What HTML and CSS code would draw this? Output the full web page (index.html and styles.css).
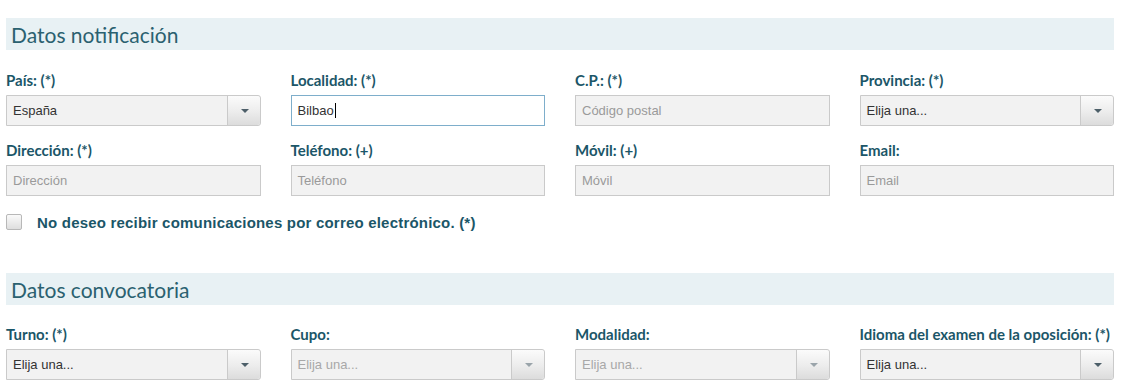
FILE: index.html
```html
<!DOCTYPE html>
<html>
    <head>
        <title>Solicitud</title>
        <meta charset="UTF-8">
        <link rel="stylesheet" href="styles.css">
    </head>
    <body>
        <!-- Datos notificación -->
        <div class="section">
            <h2 class="section-title">Datos notificación</h2>
            <div class="row">
                <div class="field">
                    <label>País: (*)</label>
                    <div class="select"><span>España</span><i class="arrow"></i></div>
                </div>
                <div class="field">
                    <label>Localidad: (*)</label>
                    <div class="input focus">Bilbao<span class="caret"></span></div>
                </div>
                <div class="field">
                    <label>C.P.: (*)</label>
                    <div class="input empty">Código postal</div>
                </div>
                <div class="field">
                    <label>Provincia: (*)</label>
                    <div class="select"><span>Elija una...</span><i class="arrow"></i></div>
                </div>
            </div>
            <div class="row">
                <div class="field">
                    <label>Dirección: (*)</label>
                    <div class="input empty">Dirección</div>
                </div>
                <div class="field">
                    <label>Teléfono: (+)</label>
                    <div class="input empty">Teléfono</div>
                </div>
                <div class="field">
                    <label>Móvil: (+)</label>
                    <div class="input empty">Móvil</div>
                </div>
                <div class="field">
                    <label>Email:</label>
                    <div class="input empty">Email</div>
                </div>
            </div>
            <div class="check">
                <span class="box"></span>
                <span class="check-text">No deseo recibir comunicaciones por correo electrónico. (*)</span>
            </div>
        </div>

        <!-- Datos convocatoria -->
        <div class="section">
            <h2 class="section-title">Datos convocatoria</h2>
            <div class="row">
                <div class="field">
                    <label>Turno: (*)</label>
                    <div class="select"><span>Elija una...</span><i class="arrow"></i></div>
                </div>
                <div class="field">
                    <label>Cupo:</label>
                    <div class="select disabled"><span>Elija una...</span><i class="arrow"></i></div>
                </div>
                <div class="field">
                    <label>Modalidad:</label>
                    <div class="select disabled"><span>Elija una...</span><i class="arrow"></i></div>
                </div>
                <div class="field">
                    <label>Idioma del examen de la oposición: (*)</label>
                    <div class="select"><span>Elija una...</span><i class="arrow"></i></div>
                </div>
            </div>
        </div>
    </body>
</html>
```

FILE: styles.css
```css
/* Общие стили */
body {
    margin: 0;
    padding: 18px 14px 0 6px;
    background: #fff;
    font-family: "Liberation Sans", Arial, sans-serif;
}

/* Секции */
.section {
    margin-bottom: 42px;
}
.section:last-child {
    margin-bottom: 0;
}
.section:last-child .row {
    margin-top: 19px;
}
.section-title {
    margin: 0;
    height: 32px;
    padding: 0 0 0 5px;
    background-color: #e8f1f4;
    font-family: Lato, "Open Sans", sans-serif;
    font-size: 21px;
    font-weight: normal;
    line-height: 34px;
    color: #2b6170;
}

/* Ряды полей */
.row {
    display: grid;
    grid-template-columns: repeat(4, 1fr);
    column-gap: 30px;
    margin-top: 20px;
}
.row + .row {
    margin-top: 14px;
}
.field label {
    display: block;
    margin-bottom: 5px;
    font-family: Lato, sans-serif;
    font-size: 15px;
    font-weight: bold;
    line-height: 20px;
    color: #1b5668;
}

/* Поля ввода */
.input, .select {
    position: relative;
    height: 29px;
    border: 1px solid #cacaca;
    background-color: #f2f2f2;
    padding: 0 6px;
    font-size: 13px;
    line-height: 29px;
    color: #333;
}
.input.empty {
    color: #9a9a9a;
}
.input.focus {
    background-color: #fff;
    border-color: #7eaecb;
}
.caret {
    display: inline-block;
    width: 1px;
    height: 15px;
    margin-left: 1px;
    vertical-align: -3px;
    background-color: #000;
}
.select {
    border-radius: 0 3px 3px 0;
}
.select.disabled {
    color: #a8a8a8;
}
.select .arrow {
    position: absolute;
    top: 0;
    right: 0;
    bottom: 0;
    width: 32px;
    border-left: 1px solid #cacaca;
    border-radius: 0 3px 3px 0;
    background: linear-gradient(to bottom, #fbfbfb 0%, #ececec 55%, #dcdcdc 100%);
}
.select .arrow:after {
    content: "";
    position: absolute;
    left: 13px;
    top: 13px;
    border-left: 4px solid transparent;
    border-right: 4px solid transparent;
    border-top: 4px solid #4d5f69;
}
.select.disabled .arrow:after {
    border-top-color: #9aa4aa;
}

/* Чекбокс */
.check {
    display: flex;
    align-items: center;
    margin-top: 17px;
    height: 18px;
}
.check .box {
    width: 14px;
    height: 14px;
    border: 1px solid #b8b8b8;
    border-radius: 2px;
    background: linear-gradient(to bottom, #fafafa, #dedede);
}
.check-text {
    margin-left: 15px;
    font-size: 15px;
    font-weight: bold;
    letter-spacing: 0.2px;
    color: #1b5668;
}
```
